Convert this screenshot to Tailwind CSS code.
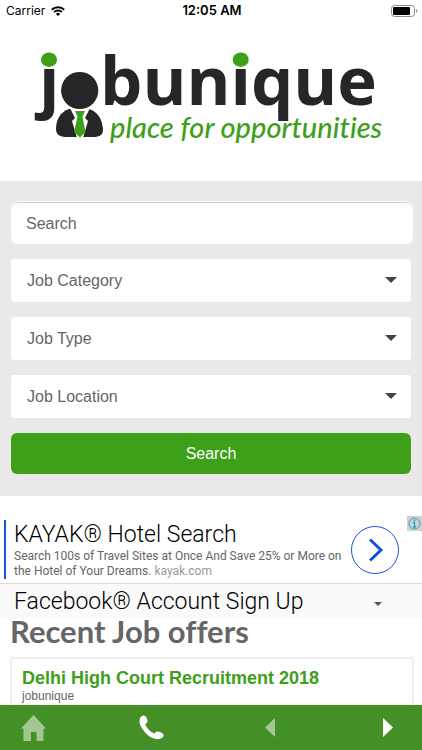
<!DOCTYPE html>
<html lang="en">
<head>
<meta charset="utf-8">
<meta name="viewport" content="width=device-width, initial-scale=1">
<title>Jobunique</title>
<script src="https://cdn.jsdelivr.net/npm/@tailwindcss/browser@4"></script>
</head>
<body class="flex h-screen flex-col bg-white font-['Liberation_Sans',Arial,sans-serif]">
  <div class="grid h-[22px] shrink-0 grid-cols-3 items-center pr-1 pl-[6px] font-['Inter',sans-serif] text-xs text-black">
    <div class="flex items-center gap-[6px]">
      <span>Carrier</span>
      <svg class="h-[10px] w-[14px]" viewBox="0 0 14 10" fill="none" stroke="#000" stroke-width="2" aria-label="Wi-Fi"><path d="M.8 3.7a8.800 8.800 0 0 1 12.400 0M3.100 6.100a5.500 5.500 0 0 1 7.800 0"/><path d="M7 10 4.900 7.900a3 3 0 0 1 4.200 0z" fill="#000" stroke="none"/></svg>
    </div>
    <time class="text-center text-[13px] font-semibold">12:05 AM</time>
    <svg class="h-3 w-[27px] justify-self-end" viewBox="0 0 27 12" aria-label="Battery"><rect x=".5" y=".5" width="23" height="11" rx="3" fill="#fff" stroke="#8c8c8c"/><rect x="2" y="2" width="17" height="8" rx="1" fill="#000"/><path d="M25 4v4c2-1 2-3 0-4" fill="#999"/></svg>
  </div>

  <main class="min-h-0 flex-1 overflow-y-auto [scrollbar-width:none]">
    <header class="h-[159px]">
      <a href="#" aria-label="jobunique, place for opportunities" class="mx-auto block w-[422px] max-w-full">
        <svg class="w-full" viewBox="0 22 422 138">
          <g font-family="Open Sans, sans-serif" font-weight="700" font-size="67" fill="#262626">
            <text x="39" y="105">j</text>
            <text x="100" y="105">bunique</text>
          </g>
          <ellipse cx="49" cy="59.700" rx="8" ry="7.300" fill="#3da018"/>
          <ellipse cx="240.700" cy="59.700" rx="8" ry="7.300" fill="#3da018"/>
          <path d="M69 109C60 112 56 120 56 129C56 135 60 137 67 137H93C100 137 103 135 103 129C102 119 98 112 89 109Z" fill="#262626"/>
          <path d="M70 108L75 118 72 121 77 138H83L88 121 85 118 90 108Z" fill="#fff"/>
          <path d="M75 111H85L82.500 116.500 85.500 132 80 137.500 74 132 77.500 116.500Z" fill="#3da018"/>
          <circle cx="79.700" cy="90.500" r="20" fill="#fff"/>
          <circle cx="79.700" cy="90.500" r="18.600" fill="#262626"/>
          <text x="110" y="138" class="[font-variant-ligatures:none]" font-family="Lato, sans-serif" font-style="italic" font-weight="500" font-size="29" fill="#3da018">place for opportunities</text>
        </svg>
      </a>
    </header>

    <form class="flex flex-col gap-[15px] bg-[#eae8e9] px-[11px] pt-5 pb-[22px] text-base text-[#666]">
      <input type="search" aria-label="Search" placeholder="Search" class="-mr-[2px] h-[43px] appearance-none rounded-md border border-white bg-white px-[14px] pt-[2px] shadow-[inset_0_1px_0_#ccc] placeholder:text-[#666] placeholder:opacity-100">
      <div class="relative">
        <select aria-label="Job Category" class="block h-[43px] w-full appearance-none rounded-[3px] bg-white px-4"><option>Job Category</option></select>
        <svg class="pointer-events-none absolute top-[18px] right-[14px] h-[6px] w-3" viewBox="0 0 12 6"><path d="M0 0h12L6 6z" fill="#444"/></svg>
      </div>
      <div class="relative">
        <select aria-label="Job Type" class="block h-[43px] w-full appearance-none rounded-[3px] bg-white px-4"><option>Job Type</option></select>
        <svg class="pointer-events-none absolute top-[18px] right-[14px] h-[6px] w-3" viewBox="0 0 12 6"><path d="M0 0h12L6 6z" fill="#444"/></svg>
      </div>
      <div class="relative">
        <select aria-label="Job Location" class="block h-[43px] w-full appearance-none rounded-[3px] bg-white px-4"><option>Job Location</option></select>
        <svg class="pointer-events-none absolute top-[18px] right-[14px] h-[6px] w-3" viewBox="0 0 12 6"><path d="M0 0h12L6 6z" fill="#444"/></svg>
      </div>
      <button type="submit" class="h-[41px] rounded-md bg-[#3da018] text-white">Search</button>
    </form>

    <section aria-label="Advertisements" class="font-['Roboto',sans-serif] font-light">
      <div class="relative flex h-[88px] items-center border-b border-[#ddd] pt-6 pr-[23px] pb-1 pl-1">
        <div class="h-[59px] flex-1 border-l-2 border-[#1a53dc] pl-2">
          <a href="#" class="block text-[23px] leading-[29px] whitespace-nowrap text-black">KAYAK® Hotel Search</a>
          <p class="text-xs leading-[15px] font-normal text-[#666]">Search 100s of Travel Sites at Once And Save 25% or More on the Hotel of Your Dreams. <a href="#" class="text-[#999]">kayak.com</a></p>
        </div>
        <a href="#" aria-label="Open KAYAK" class="ml-[6px] size-12 shrink-0"><svg viewBox="0 0 48 48" fill="none"><circle cx="24" cy="24" r="23.500" stroke="#1a53dc"/><path d="M19 13.500 30 24 19 34.500" stroke="#1250dc" stroke-width="3"/></svg></a>
        <a href="#" aria-label="Ad information" class="absolute top-5 right-0 size-[15px] bg-[#d0d0d6]"><svg viewBox="0 0 15 15" fill="none" stroke="#20a4b4"><circle cx="7.500" cy="7.500" r="5.500"/><path d="M7.500 3.500v1.500M6 6.500h1.500v4.500M6 11h3" stroke-width="1.300"/></svg></a>
      </div>
      <div class="flex h-[34px] items-center justify-between bg-[#fafafa] pt-[2px] pr-10 pl-[14px]">
        <a href="#" class="text-[23px] leading-8 text-black">Facebook® Account Sign Up</a>
        <button type="button" aria-label="More" class="pt-1"><svg class="h-1 w-2" viewBox="0 0 8 4"><path d="M0 0h8L4 4z" fill="#555"/></svg></button>
      </div>
    </section>

    <section class="px-[10px]">
      <h2 class="font-['Lato',sans-serif] text-[31px] leading-[27px] font-bold text-[#666] [font-variant-ligatures:none]">Recent Job offers</h2>
      <article class="-mr-[2px] mt-3 h-20 border-2 border-[#f0f0f0] px-[10px] pt-[9px]">
        <h3 class="text-lg leading-5 font-bold text-[#3da018]"><a href="#">Delhi High Court Recruitment 2018</a></h3>
        <p class="text-xs leading-4 text-[#666]">jobunique</p>
      </article>
    </section>
  </main>

  <nav aria-label="Toolbar" class="flex h-[45px] shrink-0 items-center justify-between bg-[#449027] px-[21px] text-white">
    <a href="#" aria-label="Home" class="opacity-50"><svg class="h-[26px] w-[25px]" viewBox="0 0 25 26" fill="currentColor"><path d="M12.500 0 25 13.500H22.500V26H15.500V17H10V26H2.500V13.500H0z"/></svg></a>
    <a href="#" aria-label="Call"><svg class="size-[25px]" viewBox="0 0 25 25" fill="currentColor"><path d="M3.500.8C5.500 0 7 1 8 4c.9 2.700.5 4-1.800 5.100 1.300 4 5 8 9.300 9.500 1.300-2.400 2.800-2.600 5.500-1.500 3.600 1.500 4.600 3.200 3 5-2.200 2.500-6.500 2.800-10.500 1C7.500 20.400 1.500 13 .6 7.500.2 4.500 1.200 1.700 3.500.8z"/></svg></a>
    <button type="button" aria-label="Back" class="flex w-[25px] justify-center opacity-50"><svg class="h-[19px] w-[10px]" viewBox="0 0 10 19" fill="currentColor"><path d="M10 0v19L0 9.500z"/></svg></button>
    <button type="button" aria-label="Forward" class="flex w-[25px] justify-center"><svg class="h-[19px] w-[10px]" viewBox="0 0 10 19" fill="currentColor"><path d="M0 0v19l10-9.500z"/></svg></button>
  </nav>
</body>
</html>
